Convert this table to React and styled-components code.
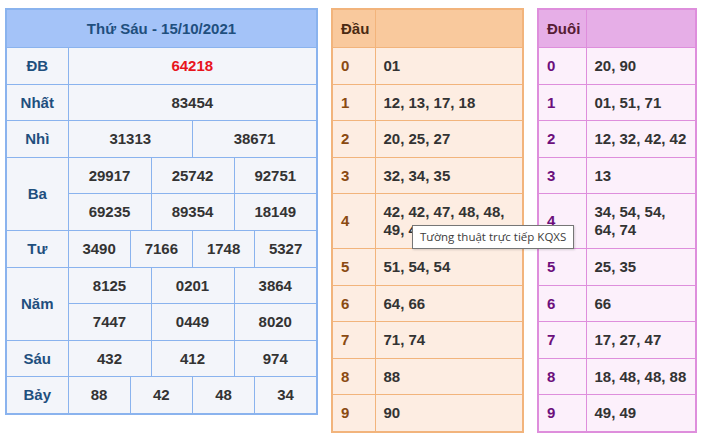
import React from "react";
import styled, { createGlobalStyle } from "styled-components";

const Global = createGlobalStyle`
  html, body { margin: 0; padding: 0; background: #ffffff; }
  body { font-family: "Liberation Sans", Arial, sans-serif; }
`;

const Page = styled.div`
  position: relative;
  display: flex;
  align-items: flex-start;
  gap: 13px;
  padding: 8px 0 0 5px;
  width: 705px;
  height: 442px;
  box-sizing: border-box;
`;

const Table = styled.table`
  border-collapse: collapse;
  table-layout: fixed;
  width: ${(p) => p.$w}px;
  border: 2px solid ${(p) => p.$border};
  font-size: 15px;
  font-weight: bold;
  line-height: 18px;
`;

const HeadCell = styled.th`
  background: ${(p) => p.$bg};
  color: ${(p) => p.$color};
  border: 1px solid ${(p) => p.$border};
  padding: 10px 8px 9px;
  text-align: ${(p) => p.$align || "left"};
  font-weight: bold;
  height: 18px;
`;

const Cell = styled.td`
  background: ${(p) => p.$bg};
  color: ${(p) => p.$color || "#333333"};
  border: 1px solid ${(p) => p.$border};
  padding: 9px ${(p) => (p.$center ? "2px" : "6px")} 8.6px ${(p) => (p.$center ? "2px" : "8px")};
  text-align: ${(p) => (p.$center ? "center" : "left")};
  vertical-align: middle;
`;

const Tooltip = styled.div`
  position: absolute;
  left: 412px;
  top: 225px;
  background: #ffffff;
  border: 1px solid #767676;
  padding: 3px 7px 4px 7px;
  font-family: "Open Sans", "Noto Sans", sans-serif;
  font-size: 11.5px;
  line-height: 15px;
  color: #3c3c3c;
  white-space: nowrap;
  box-shadow: 1px 1px 2px rgba(0, 0, 0, 0.15);
`;

const BLUE = { border: "#8ab3ee", head: "#a4c3f8", bg: "#f3f5fa", label: "#1f4f7e" };
const ORANGE = { border: "#f2b47c", head: "#f9c99d", bg: "#fdede2", label: "#8a4a12", headText: "#4a2a12" };
const PINK = { border: "#de8edc", head: "#e6aee7", bg: "#fcf0fb", label: "#6c0f7c", headText: "#561c34" };

const prizes = [
  { name: "ĐB", rows: [["64218"]], red: true },
  { name: "Nhất", rows: [["83454"]] },
  { name: "Nhì", rows: [["31313", "38671"]] },
  { name: "Ba", rows: [["29917", "25742", "92751"], ["69235", "89354", "18149"]] },
  { name: "Tư", rows: [["3490", "7166", "1748", "5327"]] },
  { name: "Năm", rows: [["8125", "0201", "3864"], ["7447", "0449", "8020"]] },
  { name: "Sáu", rows: [["432", "412", "974"]] },
  { name: "Bảy", rows: [["88", "42", "48", "34"]] },
];

const dau = ["01", "12, 13, 17, 18", "20, 25, 27", "32, 34, 35", "42, 42, 47, 48, 48, 49, 49", "51, 54, 54", "64, 66", "71, 74", "88", "90"];
const duoi = ["20, 90", "01, 51, 71", "12, 32, 42, 42", "13", "34, 54, 54, 64, 74", "25, 35", "66", "17, 27, 47", "18, 48, 48, 88", "49, 49"];

function ResultTable() {
  const c = BLUE;
  return (
    <Table $w={313} $border={c.border}>
      <colgroup>
        <col style={{ width: 62 }} />
        {Array.from({ length: 12 }).map((_, i) => (
          <col key={i} />
        ))}
      </colgroup>
      <thead>
        <tr>
          <HeadCell colSpan={13} $bg={c.head} $color={c.label} $border={c.border} $align="center">
            Thứ Sáu - 15/10/2021
          </HeadCell>
        </tr>
      </thead>
      <tbody>
        {prizes.map((p) =>
          p.rows.map((r, ri) => (
            <tr key={p.name + ri}>
              {ri === 0 && (
                <Cell rowSpan={p.rows.length} $center $bg={c.bg} $border={c.border} $color={c.label}>
                  {p.name}
                </Cell>
              )}
              {r.map((v, vi) => (
                <Cell
                  key={vi}
                  colSpan={12 / r.length}
                  $center
                  $bg={c.bg}
                  $border={c.border}
                  $color={p.red ? "#e8141c" : "#333333"}
                >
                  {v}
                </Cell>
              ))}
            </tr>
          ))
        )}
      </tbody>
    </Table>
  );
}

function LotoTable({ title, data, c, w, first }) {
  return (
    <Table $w={w} $border={c.border}>
      <colgroup>
        <col style={{ width: first }} />
        <col />
      </colgroup>
      <thead>
        <tr>
          <HeadCell $bg={c.head} $color={c.headText} $border={c.border}>
            {title}
          </HeadCell>
          <HeadCell $bg={c.head} $color={c.headText} $border={c.border} />
        </tr>
      </thead>
      <tbody>
        {data.map((v, i) => (
          <tr key={i}>
            <Cell $bg={c.bg} $border={c.border} $color={c.label}>
              {i}
            </Cell>
            <Cell $bg={c.bg} $border={c.border}>
              {v}
            </Cell>
          </tr>
        ))}
      </tbody>
    </Table>
  );
}

export default function App() {
  return (
    <>
      <Global />
      <Page>
        <ResultTable />
        <LotoTable title="Đầu" data={dau} c={ORANGE} w={193} first={43} />
        <LotoTable title="Đuôi" data={duoi} c={PINK} w={160} first={48} />
        <Tooltip>Tường thuật trực tiếp KQXS</Tooltip>
      </Page>
    </>
  );
}
